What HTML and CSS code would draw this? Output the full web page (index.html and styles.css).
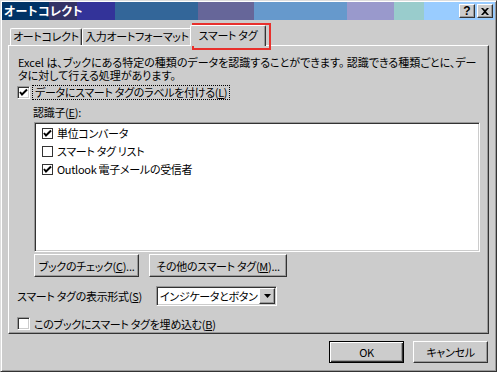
FILE: index.html
```html
<!doctype html>
<html>
<head>
    <meta charset="UTF-8">
    <link rel="stylesheet" href="styles.css">
</head>
<body>
    <div class="window">
        <div class="titlebar">
            <span class="title">オートコレクト</span>
            <div class="caption-btns">
                <span class="cbtn help">?</span>
                <span class="cbtn close">
                    <svg width="8" height="7" viewBox="0 0 8 7"><path d="M0 0 L2 0 L4 2 L6 0 L8 0 L5 3.5 L8 7 L6 7 L4 5 L2 7 L0 7 L3 3.5 Z" fill="#000"/></svg>
                </span>
            </div>
        </div>
        <div class="client">
            <div class="tabs">
                <div class="tab t1">オートコレクト</div>
                <div class="tab t2">入力オートフォーマット</div>
                <div class="tab sel">スマート タグ</div>
            </div>
            <div class="panel">
                <div class="desc">Excel は、ブックにある特定の種類のデータを認識することができます。 認識できる種類ごとに、デー</div>
                <div class="desc">タに対して行える処理があります。</div>
                <div class="check-row first">
                    <span class="chk"><svg width="9" height="9" viewBox="0 0 9 9"><path d="M1 4 L3 6.5 L8 1.5" stroke="#000" stroke-width="2" fill="none"/></svg></span>
                    <span class="focus">データにスマート タグのラベルを付ける(<u>L</u>)</span>
                </div>
                <div class="lbl">認識子(<u>E</u>):</div>
                <div class="listbox">
                    <div class="item"><span class="fchk"><svg width="9" height="9" viewBox="0 0 9 9"><path d="M1 4 L3 6.5 L8 1.5" stroke="#000" stroke-width="2" fill="none"/></svg></span>単位コンバータ</div>
                    <div class="item"><span class="fchk"></span>スマート タグ リスト</div>
                    <div class="item"><span class="fchk"><svg width="9" height="9" viewBox="0 0 9 9"><path d="M1 4 L3 6.5 L8 1.5" stroke="#000" stroke-width="2" fill="none"/></svg></span>Outlook 電子メールの受信者</div>
                </div>
                <div class="btn-row">
                    <button class="btn wide1">ブックのチェック(<u>C</u>)...</button>
                    <button class="btn wide2">その他のスマート タグ(<u>M</u>)...</button>
                </div>
                <div class="format-row">
                    <span class="format-lbl">スマート タグの表示形式(<u>S</u>)</span>
                    <div class="select">
                        <span class="val">インジケータとボタン</span>
                        <span class="drop"><svg width="7" height="4" viewBox="0 0 7 4"><path d="M0 0 L7 0 L3.5 4 Z" fill="#000"/></svg></span>
                    </div>
                </div>
                <div class="check-row last">
                    <span class="chk"></span>
                    <span class="plain">このブックにスマート タグを埋め込む(<u>B</u>)</span>
                </div>
            </div>
            <div class="footer">
                <button class="btn default">OK</button>
                <button class="btn">キャンセル</button>
            </div>
        </div>
        <div class="mark"></div>
    </div>
</body>
</html>
```

FILE: styles.css
```css
* {
    box-sizing: border-box;
}
body {
    margin: 0;
    background-color: #cccccc;
    font-family: "Noto Sans CJK JP", "Liberation Sans", sans-serif;
    font-size: 11px;
    letter-spacing: -0.3px;
    font-feature-settings: "palt";
    color: #000;
}

.window {
    position: relative;
    width: 497px;
    height: 372px;
    padding: 1px;
    background-color: #cccccc;
    border: 1px solid;
    border-color: #dddddd #333333 #333333 #dddddd;
    box-shadow: inset 1px 1px #ffffff, inset -1px -1px #999999;
    white-space: nowrap;
}

/* barra de titulo */
.titlebar {
    height: 18px;
    display: flex;
    align-items: center;
    justify-content: space-between;
    padding: 0 2px;
    background: linear-gradient(to right,
        #003366 0 47px, #333366 47px 75px, #333399 75px 113px,
        #336699 113px 196px, #666699 196px 252px, #6699cc 252px 345px,
        #9999cc 345px 392px, #99cccc 392px 422px, #99ccff 422px);
}
.title {
    color: #fff;
    font-weight: bold;
    font-size: 12px;
    line-height: 18px;
    letter-spacing: 0.3px;
}
.caption-btns {
    display: flex;
    gap: 2px;
}
.cbtn {
    width: 16px;
    height: 14px;
    display: flex;
    align-items: center;
    justify-content: center;
    background-color: #cccccc;
    border: 1px solid;
    border-color: #ffffff #333333 #333333 #ffffff;
    box-shadow: inset -1px -1px #999999;
    font-family: "Liberation Sans", sans-serif;
    font-weight: bold;
    font-size: 12px;
    line-height: 12px;
    letter-spacing: 0;
}

.client {
    padding: 0 6px;
}

/* abas */
.tabs {
    display: flex;
    align-items: flex-end;
    height: 25px;
    padding-left: 2px;
}
.tab {
    height: 17px;
    line-height: 15px;
    text-align: center;
    border: 1px solid;
    border-bottom: none;
    border-color: #ffffff #333333 #333333 #ffffff;
    box-shadow: inset -1px 0 #999999;
    border-radius: 2px 2px 0 0;
}
.t1 {
    width: 72px;
}
.t2 {
    width: 110px;
}
.tab.sel {
    position: relative;
    z-index: 1;
    width: 76px;
    height: 21px;
    line-height: 19px;
    margin: 0 0 -1px -2px;
    background-color: #cccccc;
}

.panel {
    height: 289px;
    padding: 10px 8px 0 8px;
    border: 1px solid;
    border-color: #ffffff #333333 #333333 #ffffff;
    box-shadow: inset -1px -1px #999999;
}

.desc {
    margin-left: 1px;
    height: 13px;
    line-height: 13px;
    letter-spacing: 0;
}

.check-row {
    display: flex;
    align-items: center;
    height: 15px;
}
.check-row.first {
    margin-top: 3px;
}
.check-row.last {
    margin-top: 10px;
}
.chk {
    width: 13px;
    height: 13px;
    display: flex;
    align-items: center;
    justify-content: center;
    background-color: #fff;
    border: 1px solid;
    border-color: #999999 #ffffff #ffffff #999999;
    box-shadow: inset 1px 1px #333333, inset -1px -1px #cccccc;
}
.focus {
    margin-left: 2px;
    padding: 0 2px;
    line-height: 13px;
    border: 1px dotted #000;
}
.plain {
    margin-left: 4px;
}

.lbl {
    margin: 5px 0 0 16px;
    line-height: 14px;
}

.listbox {
    margin: 3px 0 0 17px;
    height: 130px;
    background-color: #fff;
    border: 1px solid;
    border-color: #999999 #ffffff #ffffff #999999;
    box-shadow: inset 1px 1px #333333, inset -1px -1px #cccccc;
    padding: 1px 0 0 7px;
}
.item {
    display: flex;
    align-items: center;
    height: 18px;
}
.fchk {
    width: 11px;
    height: 11px;
    display: flex;
    align-items: center;
    justify-content: center;
    margin-right: 4px;
    border: 1px solid #333333;
    background-color: #fff;
}

.btn-row {
    display: flex;
    gap: 10px;
    margin: 2px 0 0 17px;
}
.btn {
    height: 23px;
    padding: 0;
    font: inherit;
    letter-spacing: inherit;
    font-feature-settings: inherit;
    color: #000;
    background-color: #cccccc;
    border: 1px solid;
    border-color: #ffffff #333333 #333333 #ffffff;
    box-shadow: inset -1px -1px #999999;
}
.wide1 {
    width: 105px;
}
.wide2 {
    width: 138px;
}

.format-row {
    display: flex;
    align-items: center;
    margin-top: 9px;
    height: 20px;
}
.format-lbl {
    width: 139px;
}
.select {
    width: 121px;
    height: 20px;
    display: flex;
    align-items: center;
    justify-content: space-between;
    background-color: #fff;
    border: 1px solid;
    border-color: #999999 #ffffff #ffffff #999999;
    box-shadow: inset 1px 1px #333333, inset -1px -1px #cccccc;
    padding: 1px 1px 1px 3px;
}
.drop {
    width: 16px;
    height: 16px;
    display: flex;
    align-items: center;
    justify-content: center;
    background-color: #cccccc;
    border: 1px solid;
    border-color: #ffffff #333333 #333333 #ffffff;
    box-shadow: inset -1px -1px #999999;
}

.footer {
    display: flex;
    justify-content: flex-end;
    gap: 9px;
    margin-top: 7px;
    padding-right: 1px;
}
.footer .btn {
    width: 75px;
    height: 22px;
}
.btn.default {
    border: 1px solid #000;
    box-shadow: inset 1px 1px #ffffff, inset -1px -1px #333333, inset -2px -2px #999999;
}

/* marcacao vermelha sobre a aba */
.mark {
    position: absolute;
    left: 191px;
    top: 22px;
    width: 79px;
    height: 27px;
    border: 2px solid #e8302c;
}
```
